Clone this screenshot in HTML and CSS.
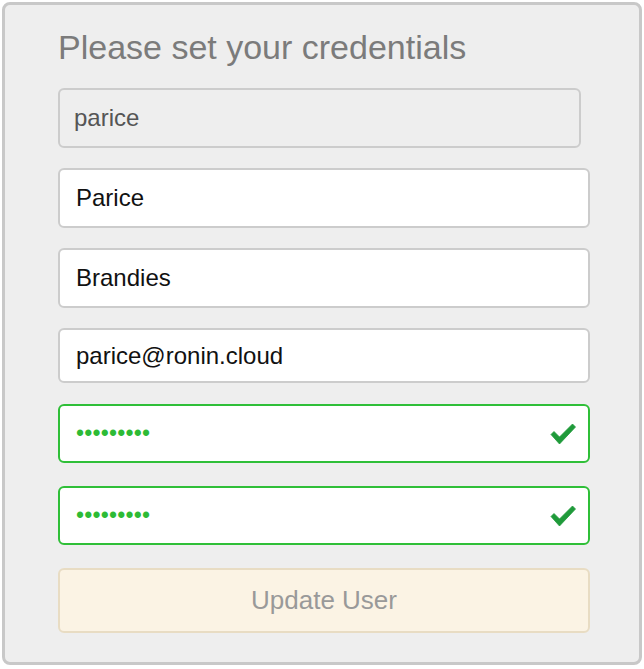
FILE: index.html
```html
<!DOCTYPE html>
<html lang="en">
<head>
<meta charset="utf-8">
<title>Please set your credentials</title>
<link rel="stylesheet" href="styles.css">
</head>
<body>
<div class="frame">
  <h1 class="title">Please set your credentials</h1>
  <div class="form">
    <div class="field field-disabled">parice</div>
    <div class="field">Parice</div>
    <div class="field">Brandies</div>
    <div class="field field-short">parice@ronin.cloud</div>
    <div class="field field-valid gap-1">
      <span class="dots">&bull;&bull;&bull;&bull;&bull;&bull;&bull;&bull;&bull;</span>
      <svg class="check" width="26" height="22" viewBox="0 0 26 22"><path d="M1 11.5 L4 8.5 L9.5 14 L22.5 1 L25.5 4 L9.5 21 Z" fill="#1f9a3a" stroke="#1f9a3a" stroke-width="0.8" stroke-linejoin="round"/></svg>
    </div>
    <div class="field field-valid gap-3">
      <span class="dots">&bull;&bull;&bull;&bull;&bull;&bull;&bull;&bull;&bull;</span>
      <svg class="check" width="26" height="22" viewBox="0 0 26 22"><path d="M1 11.5 L4 8.5 L9.5 14 L22.5 1 L25.5 4 L9.5 21 Z" fill="#1f9a3a" stroke="#1f9a3a" stroke-width="0.8" stroke-linejoin="round"/></svg>
    </div>
    <div class="button gap-3">Update User</div>
  </div>
</div>
</body>
</html>
```
FILE: styles.css
```css
html, body {
  margin: 0;
  padding: 0;
  background: #ffffff;
}
body {
  font-family: "Liberation Sans", Arial, sans-serif;
}
.frame {
  box-sizing: border-box;
  width: 640px;
  height: 663px;
  margin: 2px;
  border: 3px solid #c8c8c8;
  border-radius: 8px;
  background: #eeeeee;
  padding: 22px 49px 0 53px;
}
.title {
  margin: 0;
  font-size: 34px;
  line-height: 40px;
  font-weight: normal;
  color: #7b7b7b;
}
.form {
  margin-top: 21px;
  display: flex;
  flex-direction: column;
  gap: 20px;
}
.field {
  box-sizing: border-box;
  height: 60px;
  border: 2px solid #cccccc;
  border-radius: 6px;
  background: #ffffff;
  padding: 0 12px 0 16px;
  display: flex;
  align-items: center;
  justify-content: space-between;
  font-size: 24px;
  color: #111111;
}
.field-disabled {
  width: 523px;
  background: #eeeeee;
  color: #555555;
  padding-left: 14px;
}
.field-short {
  height: 55px;
}
.field-valid {
  height: 59px;
  border-color: #2fbf38;
}
.gap-1 {
  margin-top: 1px;
}
.gap-3 {
  margin-top: 3px;
}
.dots {
  color: #2dbb35;
  font-size: 23px;
  letter-spacing: 0.2px;
}
.check {
  display: block;
}
.button {
  box-sizing: border-box;
  height: 65px;
  border: 2px solid #e8dcc3;
  border-radius: 6px;
  background: #fbf3e4;
  display: flex;
  align-items: center;
  justify-content: center;
  font-size: 26px;
  color: #999999;
}
```
